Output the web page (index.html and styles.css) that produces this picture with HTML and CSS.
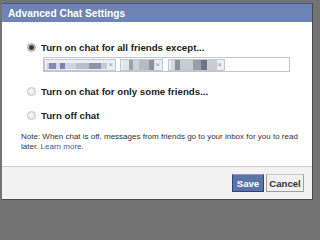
FILE: index.html
```html
<!DOCTYPE html>
<html>
<head>
<meta charset="utf-8">
<link rel="stylesheet" href="styles.css">
</head>
<body>
<div class="dialog">
  <div class="header"><span class="title">Advanced Chat Settings</span></div>
  <div class="content">
    <label class="option"><span class="radio checked"></span><span class="label">Turn on chat for all friends except...</span></label>
    <div class="tokenbox">
      <span class="token t1"><span class="blur"></span><span class="x">×</span></span>
      <span class="token t2"><span class="blur"></span><span class="x">×</span></span>
      <span class="token t3"><span class="blur"></span><span class="x">×</span></span>
    </div>
    <label class="option opt2"><span class="radio"></span><span class="label">Turn on chat for only some friends...</span></label>
    <label class="option opt3"><span class="radio"></span><span class="label">Turn off chat</span></label>
    <div class="note">
      <span class="line">Note: When chat is off, messages from friends go to your inbox for you to read</span>
      <span class="line"><span>later.</span> <a href="#" class="link">Learn more.</a></span>
    </div>
  </div>
  <div class="footer">
    <button class="btn save">Save</button>
    <button class="btn cancel">Cancel</button>
  </div>
</div>
</body>
</html>
```

FILE: styles.css
```css
* { box-sizing: border-box; }
html, body { margin: 0; }
html { background: #737373; }
body {
  width: 319px;
  height: 206px;
  overflow: hidden;
  background: #737373;
  padding: 3px 0 0 2px;
  font-family: "Liberation Sans", Arial, sans-serif;
}
.dialog {
  width: 311px;
  height: 197px;
  background: #fff;
  border-right: 1px solid #4a4a4a;
  border-bottom: 1px solid #4a4a4a;
  display: flex;
  flex-direction: column;
}
.header {
  height: 19px;
  background: #6d84b4;
  border-top: 1px solid #3b5998;
  padding-left: 6px;
  display: flex;
  align-items: center;
}
.title {
  color: #fff;
  font-weight: bold;
  font-size: 10.2px;
}
.content {
  height: 144px;
  padding-top: 18px;
  display: flex;
  flex-direction: column;
}
.option {
  display: flex;
  align-items: center;
  height: 14px;
  padding-left: 25px;
  gap: 5px;
}
.opt2 { margin-top: 12px; }
.opt3 { margin-top: 10px; }
.radio {
  width: 9px;
  height: 9px;
  border-radius: 50%;
  border: 1px solid #c4c4c4;
  background: radial-gradient(circle at 50% 50%, #fafafa 0, #e2e2e2 100%);
  flex: none;
}
.radio.checked {
  border-color: #a8a8a8;
  background: radial-gradient(circle at 50% 50%, #2c3a40 0 1.8px, #6a7478 2.4px, #d4d4d4 3.2px);
}
.label {
  font-size: 9.7px;
  font-weight: bold;
  color: #222;
}
.tokenbox {
  margin: 3px 0 0 41px;
  width: 247px;
  height: 15px;
  border: 1px solid #bdc4d4;
  display: flex;
  align-items: center;
  gap: 4px;
}
.token {
  height: 12px;
  border: 1px solid #c3c7d3;
  background: #eceef3;
  display: flex;
  align-items: center;
  justify-content: space-between;
  padding: 0 2px 0 2px;
}
.t1 { width: 72px; }
.t2 { width: 43px; }
.t3 { width: 57px; margin-left: 1px; }
.blur { height: 6px; margin-top: 2px; }
.t1 .blur {
  width: 60px;
  background: linear-gradient(to right, #c9cede 0 2px, #7d8bb5 2px 9px, #d5d8e3 9px 13px, #7886b2 13px 18px, #d0d4e0 18px 29px, #bcc0cc 29px 42px, #8e94a6 42px 54px, #c5c9d6 54px);
}
.t2 .blur {
  width: 34px;
  height: 10px;
  margin-top: 0;
  background: linear-gradient(to right, #e2e4ea 0 6px, #9da1ab 6px 10px, #cfd1d8 10px 16px, #b7bac3 16px 26px, #8e929d 26px 31px, #d8dae0 31px);
}
.t3 .blur {
  width: 46px;
  height: 10px;
  margin-top: 0;
  background: linear-gradient(to right, #d3d6de 0 4px, #8c909b 4px 9px, #c8cbd3 9px 22px, #9a9ea9 22px 30px, #6e7385 30px 36px, #c9ccd5 36px);
}
.x {
  font-size: 8px;
  line-height: 8px;
  color: #8f95a5;
}
.note {
  margin-top: 10px;
  padding: 0 6px 0 19px;
  font-size: 8px;
  line-height: 10px;
  color: #333;
  display: flex;
  flex-direction: column;
}
.line {
  display: block;
  white-space: nowrap;
}
.link {
  color: #3b5998;
  text-decoration: none;
}
.footer {
  height: 33px;
  background: #f2f2f2;
  border-top: 1px solid #cfcfcf;
  display: flex;
  justify-content: flex-end;
  align-items: center;
  padding-right: 8px;
  gap: 2px;
}
.btn {
  height: 18px;
  margin: 0;
  padding: 0;
  font-family: "Liberation Sans", Arial, sans-serif;
  font-size: 9.6px;
  font-weight: bold;
  cursor: pointer;
}
.save {
  width: 32px;
  background: #5b74a8;
  color: #fff;
  border: 1px solid #29447e;
  border-top-color: #8a9cc2;
}
.cancel {
  width: 38px;
  background: #f0f0f0;
  color: #333;
  border: 1px solid #a0a0a0;
  border-top-color: #c8c8c8;
}
```
